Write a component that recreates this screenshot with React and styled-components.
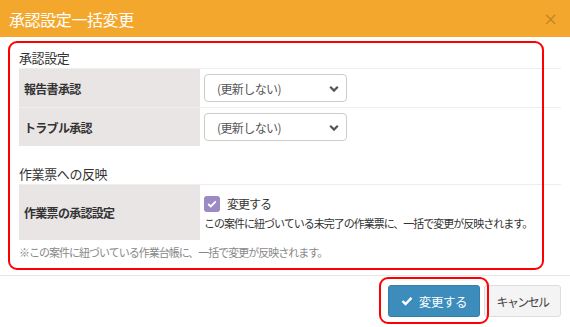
import React from "react";
import styled, { createGlobalStyle } from "styled-components";

const Global = createGlobalStyle`
  html, body { margin: 0; padding: 0; background: #fff; }
  body { font-family: "Noto Sans CJK JP", "Noto Sans", sans-serif; color: #333; }
  * { box-sizing: border-box; }
`;

const Dialog = styled.div`
  width: 570px;
  height: 327px;
  display: flex;
  flex-direction: column;
  background: #fff;
  position: relative;
  overflow: hidden;
`;

const Header = styled.div`
  height: 37px;
  background: #f3a82d;
  display: flex;
  align-items: center;
  justify-content: space-between;
  padding: 0 12px 0 9px;
`;

const Title = styled.h1`
  margin: 0;
  font-size: 16px;
  font-weight: 400;
  color: #fff;
  line-height: 20px;
  letter-spacing: -0.4px;
`;

const Close = styled.span`
  font-size: 18px;
  line-height: 20px;
  color: rgba(0, 0, 0, 0.2);
  font-family: "DejaVu Sans", sans-serif;
`;

const Body = styled.div`
  position: relative;
  padding: 11px 9px 15px 19px;
  border-bottom: 1px solid #e5e5e5;
`;

const SectionTitle = styled.div`
  font-size: 13px;
  line-height: 20px;
  color: #333;
  letter-spacing: -0.4px;
  margin-top: ${(p) => p.$mt || 0}px;
`;

const Table = styled.div`
  display: flex;
  flex-direction: column;
`;

const Row = styled.div`
  display: grid;
  grid-template-columns: 181px 1fr;
  height: ${(p) => p.$h}px;
  border-top: 1px solid #eeeeee;
`;

const Label = styled.div`
  background: #eae5e5;
  display: flex;
  align-items: center;
  padding-left: 5px;
  font-size: 12px;
  font-weight: 700;
  letter-spacing: -0.7px;
  color: #333;
`;

const Cell = styled.div`
  display: flex;
  flex-direction: column;
  justify-content: center;
  padding-left: 4px;
  font-size: 12px;
  color: #333;
  white-space: nowrap;
`;

const SelectBox = styled.div`
  position: relative;
  width: 143px;
  height: 28px;
  border: 1px solid #ccc;
  border-radius: 4px;
  background: #fff;
  display: flex;
  align-items: center;
  padding-left: 12px;
  font-size: 12px;
  letter-spacing: -0.6px;
  color: #555;
`;

const Chevron = styled.svg`
  position: absolute;
  right: 7px;
  top: 10px;
`;

const CheckLine = styled.div`
  display: flex;
  align-items: center;
  gap: 7px;
  line-height: 16px;
  margin-top: 2px;
  letter-spacing: -1px;
`;

const CheckBox = styled.span`
  width: 16px;
  height: 16px;
  border-radius: 3px;
  background: #9c8ac4;
  display: inline-flex;
  align-items: center;
  justify-content: center;
`;

const Desc = styled.div`
  line-height: 16px;
  margin-top: 3px;
  font-size: 11px;
  letter-spacing: -1px;
`;

const Note = styled.div`
  margin-top: 4px;
  font-size: 11px;
  line-height: 16px;
  letter-spacing: -1px;
  color: #888;
  white-space: nowrap;
`;

const Footer = styled.div`
  position: relative;
  display: flex;
  justify-content: flex-end;
  gap: 4px;
  padding: 9px 9px 0 0;
`;

const Button = styled.button`
  height: 32px;
  padding: 0;
  width: ${(p) => p.$w}px;
  border-radius: 3px;
  border: 1px solid ${(p) => (p.$primary ? "#367fa9" : "#ddd")};
  background: ${(p) => (p.$primary ? "#3c8dbc" : "#f4f4f4")};
  color: ${(p) => (p.$primary ? "#fff" : "#444")};
  font-family: inherit;
  font-size: ${(p) => (p.$primary ? 12.5 : 12)}px;
  letter-spacing: ${(p) => (p.$primary ? -0.4 : -1.6)}px;
  white-space: nowrap;
  display: flex;
  align-items: center;
  justify-content: center;
  gap: 6px;
`;

const Annotation = styled.div`
  position: absolute;
  border: 2px solid #ff0000;
  border-radius: 9px;
  pointer-events: none;
  left: ${(p) => p.$l}px;
  top: ${(p) => p.$t}px;
  width: ${(p) => p.$w}px;
  height: ${(p) => p.$h}px;
`;

function Select() {
  return (
    <SelectBox>
      (更新しない)
      <Chevron width="10" height="8" viewBox="0 0 10 8">
        <path d="M1.2 1.8 L5 5.6 L8.8 1.8" fill="none" stroke="#555" strokeWidth="2.2" />
      </Chevron>
    </SelectBox>
  );
}

export default function App() {
  return (
    <>
      <Global />
      <Dialog>
        <Header>
          <Title>承認設定一括変更</Title>
          <Close>×</Close>
        </Header>
        <Body>
          <SectionTitle>承認設定</SectionTitle>
          <Table>
            <Row $h={39}>
              <Label>報告書承認</Label>
              <Cell><Select /></Cell>
            </Row>
            <Row $h={39}>
              <Label>トラブル承認</Label>
              <Cell><Select /></Cell>
            </Row>
          </Table>
          <SectionTitle $mt={18}>作業票への反映</SectionTitle>
          <Table>
            <Row $h={56}>
              <Label>作業票の承認設定</Label>
              <Cell>
                <CheckLine>
                  <CheckBox>
                    <svg width="10" height="8" viewBox="0 0 10 8">
                      <path d="M1.2 4 L3.8 6.4 L8.8 1.4" fill="none" stroke="#fff" strokeWidth="1.8" />
                    </svg>
                  </CheckBox>
                  変更する
                </CheckLine>
                <Desc>この案件に紐づいている未完了の作業票に、一括で変更が反映されます。</Desc>
              </Cell>
            </Row>
          </Table>
          <Note>※この案件に紐づいている作業台帳に、一括で変更が反映されます。</Note>
          <Annotation $l={8} $t={4} $w={536} $h={229} />
        </Body>
        <Footer>
          <Button $primary $w={92}>
            <svg width="12" height="10" viewBox="0 0 12 10">
              <path d="M1.5 5 L4.5 8 L10.5 1.8" fill="none" stroke="#fff" strokeWidth="2.4" />
            </svg>
            変更する
          </Button>
          <Button $w={77}>キャンセル</Button>
          <Annotation $l={379} $t={1} $w={110} $h={47} />
        </Footer>
      </Dialog>
    </>
  );
}
